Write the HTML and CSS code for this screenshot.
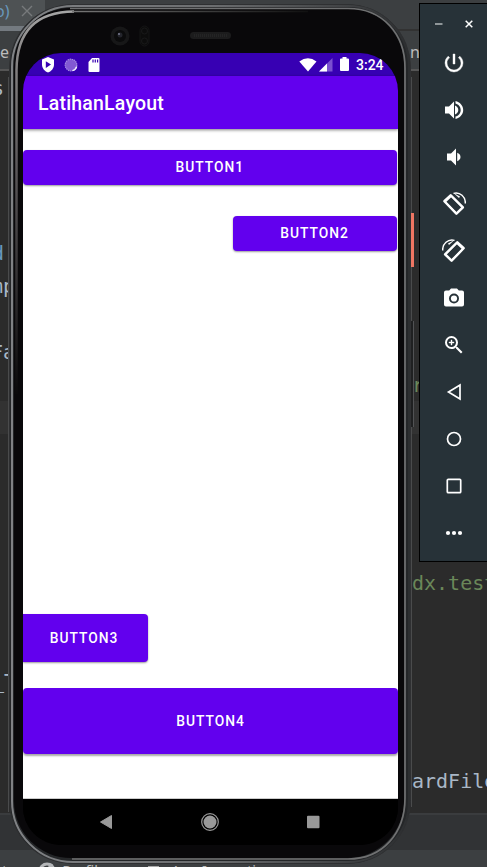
FILE: index.html
```
<!DOCTYPE html>
<html lang="en">
<head>
<meta charset="utf-8">
<title>LatihanLayout</title>
<link rel="stylesheet" href="styles.css">
</head>
<body>
<div class="desktop">
  <div class="ide">
    <div class="tabs"><span class="tab"><span class="tab-name">o)</span><svg width="12" height="12" viewBox="0 0 12 12" stroke="#777a7c" stroke-width="1.4"><path d="M1 1l10 10M11 1L1 11"/></svg></span></div>
    <div class="crumbs"><span>e</span><span class="crumb-end">n</span></div>
    <div class="editor"><div class="caret-row"></div></div>
    <div class="console"></div>
    <div class="toolbar"><span>t</span><svg width="18" height="18" viewBox="0 0 18 18" fill="none" stroke="#b5b7b9" stroke-width="3"><circle cx="9" cy="9" r="7"/><path d="M9 9l5-7"/></svg><span class="tool-a">Profiler</span><i class="tool-icon"></i><span class="tool-b">App Inspection</span></div>
  </div>
  <span class="code c1">s</span><span class="code c2">d</span><span class="code c3">mp</span><span class="code c4">Fa</span><span class="code c5">_T</span>
  <span class="code green c6">r</span><span class="code green c7">dx.test</span><span class="code c8">ardFile</span>
  <i class="edge-line left-line"></i><i class="edge-line"></i><i class="key power-key"></i><i class="key volume-key"></i>

  <div class="phone">
    <svg class="frame" width="404" height="860" viewBox="0 0 404 860" fill="none">
      <defs>
        <linearGradient id="rim" x1="0" y1="0" x2="1" y2="0"><stop offset="0" stop-color="#808285"/><stop offset=".5" stop-color="#6c6e70"/><stop offset="1" stop-color="#2c2e30"/></linearGradient>
        <linearGradient id="shine" x1="0" y1="0" x2="0" y2="1"><stop offset="0" stop-color="#a5a5a5"/><stop offset=".1" stop-color="#8a8888"/><stop offset=".4" stop-color="#5d5a5c"/><stop offset="1" stop-color="#0b0a0b"/></linearGradient>
        <linearGradient id="top" x1="0" y1="0" x2="1" y2="0"><stop offset="0" stop-color="#777"/><stop offset=".5" stop-color="#444"/><stop offset="1" stop-color="#111"/></linearGradient>
      </defs>
      <rect x="1.500" y=".5" width="401" height="859" rx="63" fill="#242628" stroke="#2f3032"/>
      <rect x="4" y="2" width="397" height="856" rx="61" stroke="url(#rim)" stroke-width="2"/>
      <rect x="6" y="4" width="390" height="850" rx="57" fill="#09080a"/>
      <path d="M8.500 390V66Q9 8 66 7.500" stroke="url(#shine)" stroke-width="2.500"/>
      <path d="M64 7.500L300 7.600" stroke="url(#top)" stroke-width="1.500"/>
      <path d="M62 4.500H340C375 4.500 397 30 397 64V794C397 829 375 855 340 855H64" stroke="#707172" stroke-width="1.700"/>
      <circle cx="112" cy="32" r="9.500" fill="#171718"/><circle cx="112" cy="32" r="6" fill="#0b0b0c"/><circle cx="112" cy="31" r="2.500" fill="#24252c"/><circle cx="111" cy="30" r="1" fill="#797b91"/>
      <rect x="132" y="22" width="9" height="20" rx="4.500" fill="#0c0c0c" stroke="#141415"/><circle cx="136.500" cy="27" r="3" stroke="#19191a"/><circle cx="136.500" cy="37" r="3" stroke="#19191a"/>
      <rect x="182" y="28" width="41" height="7" rx="3.500" fill="#1c1c1d"/><path d="M186 31.500h33" stroke="#242425" stroke-width="3" stroke-dasharray="1 1"/>
    </svg>
    <div class="screen">
      <div class="status">
        <svg width="14" height="16" viewBox="0 0 14 16"><path fill="#fff" d="M7 0l6 2.500v5C13 11.500 10 14.500 7 15.500 4 14.500 1 11.500 1 7.500v-5z"/><path fill="#3700b3" d="M4.800 4.300v6.600L10 7.600z"/></svg>
        <svg class="sync" width="14" height="14" viewBox="0 0 14 14"><circle cx="7" cy="7" r="5.800" fill="#8259d3" stroke="#a68be2" stroke-width="1.200" stroke-dasharray="1.500 .6"/><path d="M12.700 8.500A6 6 0 0 1 8.500 12.700" fill="none" stroke="#efeafb" stroke-width="1.300"/></svg>
        <svg width="12" height="14" viewBox="0 0 12 14"><path fill="#fff" d="M4 0h6.500q1 0 1 1v12q0 1-1 1h-9q-1 0-1-1V4z"/><path stroke="#3700b3" stroke-width="1.200" d="M5 1.500v3M7.300 1.500v3M9.600 1.500v3"/></svg>
        <span class="space"></span>
        <svg width="18" height="14" viewBox="0 0 18 14"><path fill="#fff" d="M.3 3.500Q9-2.800 17.500 3.500L9 13.500z"/></svg>
        <svg class="signal" width="14" height="14" viewBox="0 0 14 14"><path fill="#7a50cf" d="M13.500 0v13.500H0z"/><path fill="#fff" d="M8 5.500v8H0z"/></svg>
        <svg class="battery" width="10" height="15" viewBox="0 0 10 15"><path fill="#fff" d="M2.500 0h4v1.500H8q1 0 1 1V13q0 1-1 1H1q-1 0-1-1V2.500q0-1 1-1h1.500z"/></svg>
        <span class="time">3:24</span>
      </div>
      <div class="appbar">LatihanLayout</div>
      <div class="content">
        <div class="button button1">BUTTON1</div>
        <div class="button button2">BUTTON2</div>
        <div class="button button3">BUTTON3</div>
        <div class="button button4">BUTTON4</div>
      </div>
      <div class="nav">
        <svg width="14" height="16" viewBox="0 0 14 16"><path fill="#999" d="M12.500 1.500v13L1.500 8z" stroke="#999" stroke-linejoin="round"/></svg>
        <svg width="20" height="20" viewBox="0 0 20 20"><circle cx="10" cy="10" r="6.500" fill="#999"/><circle cx="10" cy="10" r="8.300" fill="none" stroke="#999" stroke-width="1.200"/></svg>
        <svg width="14" height="14" viewBox="0 0 14 14"><rect x="1" y=".7" width="12.500" height="12.500" rx="1" fill="#999"/></svg>
      </div>
    </div>
  </div>

  <div class="panel">
    <div class="window-buttons">
      <svg width="8" height="8" viewBox="0 0 8 8"><path d="M0 4h7.500" stroke="#aab0b3" stroke-width="1.600"/></svg>
      <svg width="8" height="8" viewBox="0 0 8 8"><path d="M.7.7l6.600 6.600M7.300.7L.7 7.300" stroke="#fff" stroke-width="1.500"/></svg>
    </div>
    <svg viewBox="0 0 24 24"><path d="M13 3h-2v10h2V3zm4.830 2.170l-1.420 1.420A6.920 6.920 0 0 1 19 12c0 3.870-3.130 7-7 7A6.995 6.995 0 0 1 7.580 6.580L6.170 5.170A8.932 8.932 0 0 0 3 12a9 9 0 0 0 18 0c0-2.740-1.230-5.180-3.170-6.830z" stroke="#fff" stroke-width=".4"/></svg>
    <svg viewBox="0 0 24 24"><path d="M3 8.500v7h4l5 5v-17l-5 5H3zm10-1v9c1.900-.7 3.300-2.500 3.300-4.500s-1.400-3.800-3.300-4.500zM13.500 3v2.400c3.100.8 5.200 3.500 5.200 6.600s-2.100 5.800-5.200 6.600V21c4.300-.9 7.700-4.500 7.700-9s-3.400-8.100-7.700-9z"/></svg>
    <svg viewBox="0 0 24 24"><path d="M5 8.500v7h4l5 5v-17l-5 5H5zm10.200-.7v8.400c1.900-.7 3.300-2.200 3.300-4.200s-1.400-3.500-3.300-4.200z"/></svg>
    <svg viewBox="0 0 24 24"><g id="rotate"><path fill-rule="evenodd" d="M9.600 2.500q-.9-.8-1.800 0L1.500 8.300q-.8.900 0 1.800L13.500 22.600q.9.800 1.800 0l6.500-6.400q.8-.9 0-1.800zM9.200 5.200l10 10-5.100 5L4.200 10z"/><path d="M9 4L20.500 15.500M2.800 9L14.500 21" stroke="#fff" stroke-width="1.300"/><path d="M11.500 1.400C18-.5 23.700 5 23.300 11.500" fill="none" stroke="#fff" stroke-width="1.500"/><path d="M11.500 1l6.500 3.500-1 1.500z"/></g></svg>
    <svg viewBox="0 0 24 24"><use href="#rotate" transform="matrix(-1 0 0 1 24 0)"/></svg>
    <svg viewBox="0 0 24 24"><path fill-rule="evenodd" d="M9 2.500L7.200 4.500H4q-2 0-2 2v12q0 2 2 2h16q2 0 2-2v-12q0-2-2-2h-3.200L15 2.500zM12 7.500a5 5 0 1 1 0 10 5 5 0 0 1 0-10z"/><circle cx="12" cy="12.500" r="3.100"/></svg>
    <svg viewBox="0 0 24 24"><path d="M15.500 14h-.79l-.28-.27A6.471 6.471 0 0 0 16 9.500 6.500 6.500 0 1 0 9.500 16c1.610 0 3.090-.59 4.230-1.570l.27.280v.79l5 4.990L20.490 19l-4.990-5zm-6 0C7.010 14 5 11.990 5 9.500S7.010 5 9.500 5 14 7.010 14 9.500 11.990 14 9.500 14z"/><path d="M12 10h-2v2H9v-2H7V9h2V7h1v2h2z" stroke="#fff" stroke-width=".4"/></svg>
    <svg class="line" viewBox="0 0 24 24"><path d="M18 5v14L6.500 12z"/></svg>
    <svg class="line" viewBox="0 0 24 24"><circle cx="12" cy="12" r="6.500"/></svg>
    <svg class="line" viewBox="0 0 24 24"><rect x="5.300" y="5.300" width="13.400" height="13.400" rx="1"/></svg>
    <svg viewBox="0 0 24 24"><circle cx="6" cy="12" r="2.100"/><circle cx="12" cy="12" r="2.100"/><circle cx="18" cy="12" r="2.100"/></svg>
  </div>
</div>
</body>
</html>
```
FILE: styles.css
```
* { box-sizing: border-box; }
body { margin: 0; background: #2b2b2b; }
svg { display: block; flex: none; }
.desktop { position: relative; width: 487px; height: 867px; overflow: hidden; font-family: "Noto Sans", sans-serif; }

.ide { display: flex; flex-direction: column; height: 867px; color: #bbb; font-size: 16px; }
.tabs { height: 31px; background: #3c3f41; border-bottom: 2px solid #323232; }
.tab { display: flex; align-items: center; gap: 12px; width: 45px; height: 31px; padding-bottom: 4px; margin-left: -5px; width: 50px; background: #4e5254; border-bottom: 5px solid #747a80; }
.tab-name { color: #6897bb; }
.crumbs { display: flex; justify-content: space-between; height: 40px; padding: 9px 67px 0 0; background: #3c3f41; border-bottom: 2px solid #555; line-height: 24px; }
.editor { height: 742px; padding-top: 330px; background: #2b2b2b; }
.caret-row { height: 33px; background: #323232; }
.console { height: 37px; background: #313335; border-top: 2px solid #3a3c3e; }
.toolbar { display: flex; height: 17px; padding: 10px 0 0 2px; background: #3c3f41; font-size: 14.500px; line-height: 20px; overflow: hidden; }
.toolbar svg { margin: 2px 6px 0 31px; }
.tool-a { width: 86px; }
.tool-icon { width: 11px; height: 2px; margin: 6px 12px 0 0; background: #aaa; }

.code { position: absolute; color: #a9b7c6; font: 20px/26px "DejaVu Sans Mono", monospace; white-space: nowrap; }
.green { color: #6a8759; }
.c1 { left: -8px; top: 75px; }
.c2 { left: -8px; top: 240px; color: #6897bb; }
.c3 { left: -9px; top: 273px; }
.c4 { left: -9px; top: 339px; }
.c5 { left: -8px; top: 668px; }
.c6 { left: 412px; top: 372px; }
.c7 { left: 412px; top: 570px; }
.c8 { left: 412px; top: 768px; }

.edge-line { position: absolute; left: 411px; top: 77px; width: 1px; height: 730px; background: #4a4b4c; }
.left-line { left: 8px; height: 735px; }
.key { position: absolute; left: 411px; width: 3px; }
.power-key { top: 213px; height: 54px; background: #ef7663; }
.volume-key { top: 321px; height: 106px; background: #1f2021; border-right: 1px solid #515254; }

.phone { position: absolute; left: 8px; top: 4px; width: 404px; height: 860px; padding: 49px 14px 18px 15px; }
.frame { position: absolute; left: 0; top: 0; }
.screen { position: relative; display: flex; flex-direction: column; width: 375px; height: 792px; overflow: hidden; border-radius: 38px; background: #000; font-family: Roboto, sans-serif; color: #fff; }
.status { display: flex; align-items: center; flex: none; height: 23px; padding: 0 15px 0 18px; background: #3700b3; }
.sync { margin: 0 10px 0 9px; }
.space { flex: 1; }
.signal { margin: 0 7px 0 2px; }
.battery { margin-right: 6px; }
.time { font-size: 14px; font-weight: 500; width: 27px; }
.appbar { z-index: 1; flex: none; height: 53px; padding-left: 15px; background: #6200ee; box-shadow: 0 1px 3px rgba(0,0,0,.5); font-size: 19.500px; font-weight: 500; line-height: 55px; letter-spacing: .2px; }
.content { display: flex; flex-direction: column; height: 670px; padding-top: 21px; background: #fff; border-bottom: 1px solid #ccc; }
.button { display: flex; align-items: center; justify-content: center; flex: none; border-radius: 4px; background: #6200ee; box-shadow: 0 1px 2px rgba(0,0,0,.4); font-size: 13.800px; font-weight: 500; letter-spacing: 1px; }
.button1 { width: 373.500px; height: 34.500px; }
.button2 { align-self: flex-end; width: 164px; height: 34.500px; margin: 31.500px 1.500px 0 0; }
.button3 { width: 125px; height: 48px; margin-top: 363px; padding-right: 3px; border-radius: 0 4px 4px 0; }
.button4 { width: 375px; height: 66px; margin-top: 26.500px; box-shadow: 0 2px 2px rgba(0,0,0,.35); }
.nav { display: flex; align-items: center; height: 46px; padding: 0 78px 0 76px; justify-content: space-between; background: #000; }

.panel { position: absolute; left: 419px; top: 3px; display: flex; flex-direction: column; align-items: center; gap: 23px; width: 70px; height: 559px; border: 1px solid #000; background: #273238; fill: #fff; }
.panel > svg { width: 24px; height: 24px; }
.panel .line { fill: none; stroke: #fff; stroke-width: 1.700; }
.window-buttons { display: flex; gap: 22px; height: 24px; padding-top: 16px; }
```
